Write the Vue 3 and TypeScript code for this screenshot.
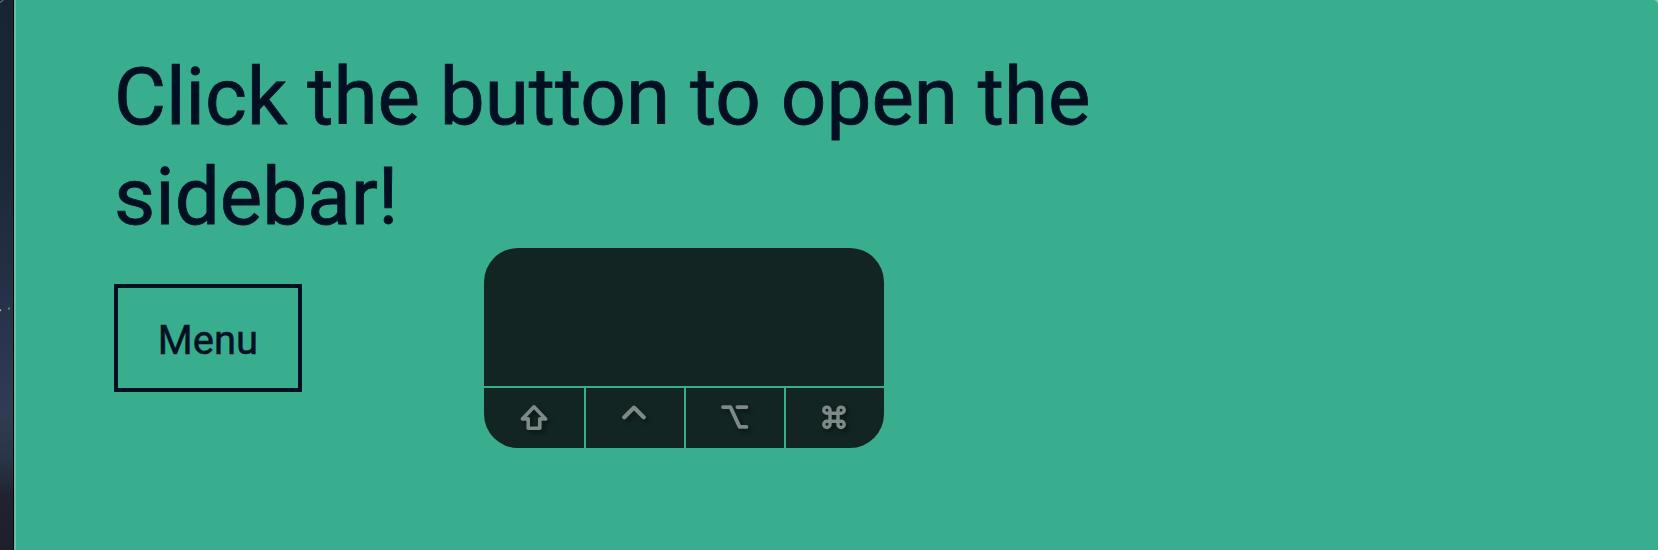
<script setup lang="ts">
interface Key {
  name: string
  weight: number
  paths: string[]
}

const keys: Key[] = [
  {
    name: 'shift',
    weight: 3.6,
    paths: ['M16 5.5 L27.6 17.6 H21.8 V27 H10.2 V17.6 H4.4 Z'],
  },
  {
    name: 'control',
    weight: 4.2,
    paths: ['M6.3 15.9 L16 6.3 L25.7 15.9'],
  },
  {
    name: 'option',
    weight: 3.8,
    paths: ['M5 5.8 H12.4 L21.6 25.6 H28.4', 'M19.4 5.8 H28.4'],
  },
  {
    name: 'command',
    weight: 3.4,
    paths: [
      'M12 12 H20 V20 H12 Z',
      'M12 12 H8.9 A3.1 3.1 0 1 1 12 8.9 Z',
      'M20 12 V8.9 A3.1 3.1 0 1 1 23.1 12 Z',
      'M20 20 H23.1 A3.1 3.1 0 1 1 20 23.1 Z',
      'M12 20 V23.1 A3.1 3.1 0 1 1 8.9 20 Z',
    ],
  },
]
</script>

<template>
  <div class="screen">
    <div class="desktop">
      <svg width="13" height="550" viewBox="0 0 13 550">
        <path d="M0 2.5 L3.5 0" stroke="#8590a0" stroke-width="1" />
        <circle cx="9" cy="308.7" r="1.1" fill="#727c85" />
        <circle cx="0.3" cy="310.2" r="1" fill="#a9b0b8" />
      </svg>
    </div>
    <main class="page">
      <h1 class="title">Click the button to open the sidebar!</h1>
      <button class="menu" type="button">Menu</button>
      <div class="overlay">
        <div class="display"></div>
        <div class="keys">
          <div v-for="key in keys" :key="key.name" class="key">
            <svg class="icon" width="32" height="32" viewBox="0 0 32 32">
              <path v-for="d in key.paths" :key="d" :d="d" :stroke-width="key.weight" />
            </svg>
          </div>
        </div>
      </div>
    </main>
  </div>
</template>

<style>
body {
  margin: 0;
  background: #38ae8f;
}
</style>

<style scoped>
.screen {
  display: flex;
  width: 1658px;
  height: 550px;
  overflow: hidden;
  background: #8fc9b8;
  font-family: Roboto, sans-serif;
  color: #001022;
}

.desktop {
  box-sizing: border-box;
  flex: 0 0 14px;
  border-right: 1px solid #000;
  background: linear-gradient(#192435 0%, #1c2738 28%, #243146 53%, #303c51 75%, #293649 83%, #20232f 90%, #1e1f2c 100%);
}

.desktop svg {
  display: block;
}

.page {
  position: relative;
  box-sizing: border-box;
  flex: 1;
  padding: 47px 98px 0;
  border-left: 2px solid #68bda5;
  border-top-right-radius: 5px;
  background: #38ae8f;
}

.title {
  width: 1100px;
  margin: 0;
  font-size: 80px;
  font-weight: 400;
  line-height: 100px;
  -webkit-text-stroke: 0.8px #001022;
}

.menu {
  display: block;
  box-sizing: border-box;
  width: 188px;
  height: 108px;
  margin: 37px 0 0;
  padding: 5px 0 0;
  border: 4px solid #001022;
  background: transparent;
  color: inherit;
  font: 400 40px/48px Roboto, sans-serif;
  -webkit-text-stroke: 0.5px #001022;
}

.overlay {
  position: absolute;
  top: 248px;
  left: 468px;
  display: flex;
  flex-direction: column;
  gap: 2px;
  width: 400px;
  height: 200px;
  overflow: hidden;
  border-radius: 34px;
}

.display {
  flex: 1;
  background: #122523;
}

.keys {
  display: grid;
  grid-template-columns: 100px 98px 98px 98px;
  gap: 2px;
  height: 60px;
}

.key {
  display: flex;
  align-items: center;
  justify-content: center;
  background: #122523;
}

.icon {
  fill: none;
  stroke: #7f8987;
  stroke-linecap: round;
  stroke-linejoin: round;
  filter: drop-shadow(3px 3px 2px rgba(0, 0, 0, 0.4));
  transform: translateY(-0.7px);
}

.key:nth-child(n + 2) .icon {
  transform: translate(-1px, -0.7px);
}
</style>
